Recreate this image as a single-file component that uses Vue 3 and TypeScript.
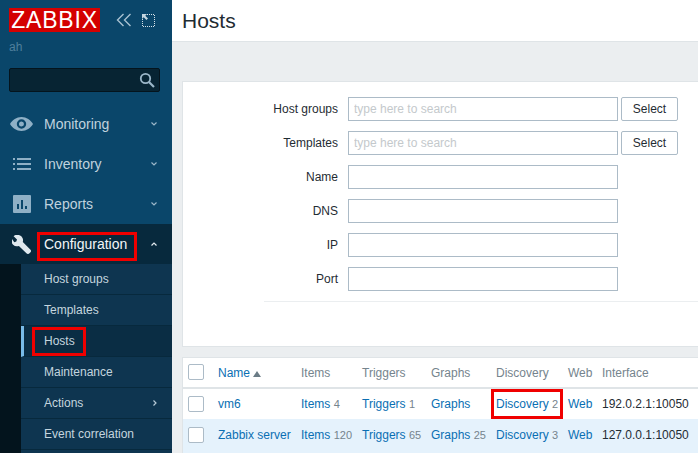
<template>
	<div class="page">
		<aside class="sidebar">
			<div class="brand">
				<div class="logo">ZABBIX</div>
				<div class="brand-actions">
					<svg width="16" height="14" viewBox="0 0 16 14" fill="none" stroke="#a9c2d2" stroke-width="1.4">
						<path d="M7.500 1 1.500 7l6 6M14.500 1l-6 6 6 6" />
					</svg>
					<svg width="13" height="13" viewBox="0 0 13 13" fill="none">
						<path d="M5 .5h7.500V12.500H.5V5" stroke="#d5e1e8" stroke-dasharray="1 1" />
						<path d="M0 0h5L3.300 1.700 6 4.400 4.400 6 1.700 3.300 0 5z" fill="#c5d6e0" />
					</svg>
				</div>
			</div>
			<div class="user">ah</div>
			<div class="search">
				<svg width="16" height="16" viewBox="0 0 16 16" fill="none" stroke="#9bb7c9">
					<circle cx="6.500" cy="6.500" r="4.700" stroke-width="1.800" />
					<path d="m10 10 5 5" stroke-width="2.200" />
				</svg>
			</div>

			<nav>
				<a v-for="item in menu" :key="item.name" class="menu-item" :class="{ open: item.open }">
					<span class="menu-icon">
						<svg v-if="item.icon === 'eye'" width="23" height="14" viewBox="0 0 23 14">
							<path fill="#8fb0c6" fill-rule="evenodd" d="M11.500 0C6.500 0 2.400 3 0 7c2.400 4 6.500 7 11.500 7S20.600 11 23 7C20.600 3 16.500 0 11.500 0Zm0 2.300a4.700 4.700 0 1 1 0 9.400 4.700 4.700 0 0 1 0-9.400Zm0 2.200a2.500 2.500 0 1 0 0 5 2.500 2.500 0 0 0 0-5Z" />
						</svg>
						<svg v-else-if="item.icon === 'list'" width="18" height="12" viewBox="0 0 18 12" fill="#8fb0c6">
							<path d="M0 0h2v2H0zM4 0h14v2H4zM0 5h2v2H0zM4 5h14v2H4zM0 10h2v2H0zM4 10h14v2H4z" />
						</svg>
						<svg v-else-if="item.icon === 'chart'" width="18" height="18" viewBox="0 0 18 18">
							<path fill="#8fb0c6" fill-rule="evenodd" d="M1 0h16a1 1 0 0 1 1 1v16a1 1 0 0 1-1 1H1a1 1 0 0 1-1-1V1a1 1 0 0 1 1-1Zm3 9v5h2V9Zm4-4v9h2V5Zm4 6v3h2v-3Z" />
						</svg>
						<svg v-else width="19" height="19" viewBox="0 0 19 19">
							<path fill="#dfe8ee" d="M7.600.300a5.400 5.400 0 0 0-6 .900l3.400 3.300-.700 2-2 .7L-.100 3.900a5.400 5.400 0 0 0 7 7l7.800 7.600c.700.700 1.800.700 2.500 0l1.300-1.300c.7-.7.7-1.800 0-2.500L10.800 7a5.400 5.400 0 0 0-3.200-6.700Z" />
						</svg>
					</span>
					<span class="menu-label">{{ item.name }}</span>
					<svg class="chevron" width="6" height="4" viewBox="0 0 6 4" fill="none" :stroke="item.open ? '#e3ebf0' : '#9bb7c9'" stroke-width="1.200">
						<path :d="item.open ? 'M.5 3.500 3 1l2.500 2.500' : 'M.5.500 3 3 5.500.500'" />
					</svg>
				</a>
			</nav>

			<div class="submenu-wrap">
				<ul class="submenu">
					<li v-for="sub in submenu" :key="sub.name" :class="{ selected: sub.selected }">
						<span>{{ sub.name }}</span>
						<svg v-if="sub.more" width="4" height="6" viewBox="0 0 4 6" fill="none" stroke="#b7cad7" stroke-width="1.200">
							<path d="M.5.500 3 3 .5 5.500" />
						</svg>
					</li>
				</ul>
			</div>
		</aside>

		<main class="main">
			<header class="title-bar">
				<h1>Hosts</h1>
			</header>

			<div class="content">
				<section class="filter">
					<div v-for="field in fields" :key="field.label" class="field">
						<label>{{ field.label }}</label>
						<input type="text" :placeholder="field.multi ? 'type here to search' : ''" />
						<button v-if="field.multi" type="button">Select</button>
					</div>
					<div class="filter-line"></div>
				</section>

				<section class="list">
					<table>
						<thead>
							<tr>
								<th class="check"><span class="box"></span></th>
								<th class="c-name"><a>Name</a><i class="sort"></i></th>
								<th class="c-items">Items</th>
								<th class="c-triggers">Triggers</th>
								<th class="c-graphs">Graphs</th>
								<th class="c-discovery">Discovery</th>
								<th class="c-web">Web</th>
								<th>Interface</th>
							</tr>
						</thead>
						<tbody>
							<tr v-for="host in hosts" :key="host.name">
								<td class="check"><span class="box"></span></td>
								<td><a>{{ host.name }}</a></td>
								<td><a>Items</a> <sup>{{ host.items }}</sup></td>
								<td><a>Triggers</a> <sup>{{ host.triggers }}</sup></td>
								<td><a>Graphs</a> <sup>{{ host.graphs }}</sup></td>
								<td><a>Discovery</a> <sup>{{ host.discovery }}</sup></td>
								<td><a>Web</a></td>
								<td>{{ host.iface }}</td>
							</tr>
						</tbody>
					</table>
				</section>
			</div>
		</main>

		<!-- red annotation boxes drawn over the screenshot -->
		<div class="mark mark-config"></div>
		<div class="mark mark-hosts"></div>
		<div class="mark mark-discovery"></div>
	</div>
</template>

<script setup lang="ts">
interface MenuItem {
	name: string;
	icon: string;
	open?: boolean;
}

interface SubItem {
	name: string;
	selected?: boolean;
	more?: boolean;
}

interface Host {
	name: string;
	items: number;
	triggers: number;
	graphs?: number;
	discovery: number;
	iface: string;
}

const menu: MenuItem[] = [
	{ name: "Monitoring", icon: "eye" },
	{ name: "Inventory", icon: "list" },
	{ name: "Reports", icon: "chart" },
	{ name: "Configuration", icon: "wrench", open: true },
];

const submenu: SubItem[] = [
	{ name: "Host groups" },
	{ name: "Templates" },
	{ name: "Hosts", selected: true },
	{ name: "Maintenance" },
	{ name: "Actions", more: true },
	{ name: "Event correlation" },
];

const fields = [
	{ label: "Host groups", multi: true },
	{ label: "Templates", multi: true },
	{ label: "Name", multi: false },
	{ label: "DNS", multi: false },
	{ label: "IP", multi: false },
	{ label: "Port", multi: false },
];

const hosts: Host[] = [
	{ name: "vm6", items: 4, triggers: 1, discovery: 2, iface: "192.0.2.1:10050" },
	{ name: "Zabbix server", items: 120, triggers: 65, graphs: 25, discovery: 3, iface: "127.0.0.1:10050" },
];
</script>

<style>
html,
body {
	margin: 0;
	height: 100%;
	overflow: hidden;
}
</style>

<style scoped>
.page {
	position: relative;
	display: flex;
	width: 698px;
	height: 453px;
	overflow: hidden;
	font-family: "Liberation Sans", Arial, sans-serif;
	font-size: 12px;
	color: #1f2c33;
	background: #ebeef0;
}

.sidebar {
	flex: 0 0 172px;
	background: #0a466a;
	overflow: hidden;
}

.brand {
	display: flex;
	align-items: center;
	padding: 8px 0 0 9px;
	height: 24px;
}

.logo {
	width: 91px;
	height: 24px;
	background: #d40000;
	color: #fff;
	font-size: 23px;
	line-height: 25px;
	letter-spacing: 0.8px;
	text-align: center;
	white-space: nowrap;
}

.brand-actions {
	display: flex;
	align-items: center;
	gap: 10px;
	margin-left: 16px;
}

.user {
	margin: 8px 0 0 9px;
	height: 15px;
	line-height: 15px;
	color: #4f7f9c;
}

.search {
	display: flex;
	align-items: center;
	justify-content: flex-end;
	box-sizing: border-box;
	margin: 13px 12px 0 9px;
	height: 24px;
	padding-right: 4px;
	background: #072433;
	border: 1px solid #04141d;
	border-radius: 2px;
}

nav {
	margin-top: 12px;
}

.menu-item {
	display: flex;
	align-items: center;
	height: 40px;
	color: #c0d2de;
	font-size: 14px;
}

.menu-item.open {
	background: #07293d;
	color: #f2f6f8;
}

.menu-icon {
	display: flex;
	justify-content: center;
	width: 23px;
	margin: 0 11px 0 10px;
}

.menu-label {
	flex: 1;
}

.chevron {
	margin-right: 15px;
}

.submenu-wrap {
	padding-left: 21px;
	background: #03141d;
}

.submenu {
	margin: 0;
	padding: 0 0 20px;
	list-style: none;
	background: #0e3550;
	color: #c5d5df;
}

.submenu li {
	display: flex;
	align-items: center;
	justify-content: space-between;
	box-sizing: border-box;
	height: 31px;
	padding: 0 15px 0 23px;
	border-bottom: 1px solid #07293d;
}

.submenu li.selected {
	padding-left: 20px;
	border-left: 3px solid #79bbe8;
	background: #0a2d44;
}

.main {
	flex: 1;
	min-width: 0;
}

.title-bar {
	box-sizing: border-box;
	height: 42px;
	padding: 0 10px;
	background: #fff;
	border-bottom: 1px solid #dfe4e7;
}

h1 {
	margin: 0;
	font-size: 21px;
	font-weight: 400;
	line-height: 41px;
	color: #1f2c33;
}

.content {
	width: 560px;
	padding: 39px 0 0 10px;
}

.filter {
	box-sizing: border-box;
	height: 266px;
	padding-top: 15px;
	background: #fff;
	border: 1px solid #dfe4e7;
}

.field {
	display: flex;
	align-items: center;
	height: 24px;
	margin-bottom: 10px;
}

.field label {
	width: 155px;
	text-align: right;
	color: #1f2c33;
}

.field input {
	box-sizing: border-box;
	width: 270px;
	height: 24px;
	margin: 0 3px 0 10px;
	padding: 0 5px;
	border: 1px solid #acbbc7;
	outline: none;
	background: #fff;
	font: inherit;
}

.field input::placeholder {
	color: #c4c9cc;
	opacity: 1;
}

.field button {
	box-sizing: border-box;
	width: 57px;
	height: 24px;
	padding: 0;
	border: 1px solid #acbbc7;
	border-radius: 2px;
	background: #fff;
	color: #1f2c33;
	font: inherit;
}

.filter-line {
	margin-left: 81px;
	border-top: 1px solid #ebeef0;
}

.list {
	box-sizing: border-box;
	margin-top: 10px;
	height: 96px;
	background: #fff;
	border: 1px solid #dfe4e7;
	border-bottom: 0;
}

table {
	table-layout: fixed;
	width: 540px;
	border-collapse: collapse;
}

th,
td {
	box-sizing: border-box;
	padding: 0;
	text-align: left;
	font-weight: 400;
	white-space: nowrap;
	vertical-align: middle;
}

th {
	height: 30px;
	color: #75848d;
	border-bottom: 2px solid #dfe4e7;
}

th.check {
	padding-bottom: 2px;
}

td {
	height: 31px;
}

tbody tr:nth-child(2) td {
	height: 34px;
	padding-bottom: 3px;
	background: #e5f2fc;
}

a {
	color: #0a6fb3;
	text-decoration: none;
}

sup {
	font-size: 11px;
	line-height: 0;
	vertical-align: baseline;
	color: #75848d;
}

.check {
	width: 35px;
	padding-left: 5px;
}

.box {
	display: block;
	box-sizing: border-box;
	width: 16px;
	height: 16px;
	background: #fff;
	border: 1px solid #acbbc7;
	border-radius: 2px;
}

.c-name {
	width: 83px;
}

.c-items {
	width: 61px;
}

.c-triggers {
	width: 69px;
}

.c-graphs {
	width: 65px;
}

.c-discovery {
	width: 72px;
}

.c-web {
	width: 34px;
}

.sort {
	display: inline-block;
	margin-left: 3px;
	border-left: 4px solid transparent;
	border-right: 4px solid transparent;
	border-bottom: 6px solid #6b7c86;
}

.mark {
	position: absolute;
	box-sizing: border-box;
	border: 3px solid #f00000;
}

.mark-config {
	left: 37px;
	top: 232px;
	width: 100px;
	height: 29px;
}

.mark-hosts {
	left: 32px;
	top: 327px;
	width: 54px;
	height: 29px;
}

.mark-discovery {
	left: 491px;
	top: 389px;
	width: 72px;
	height: 30px;
}
</style>
